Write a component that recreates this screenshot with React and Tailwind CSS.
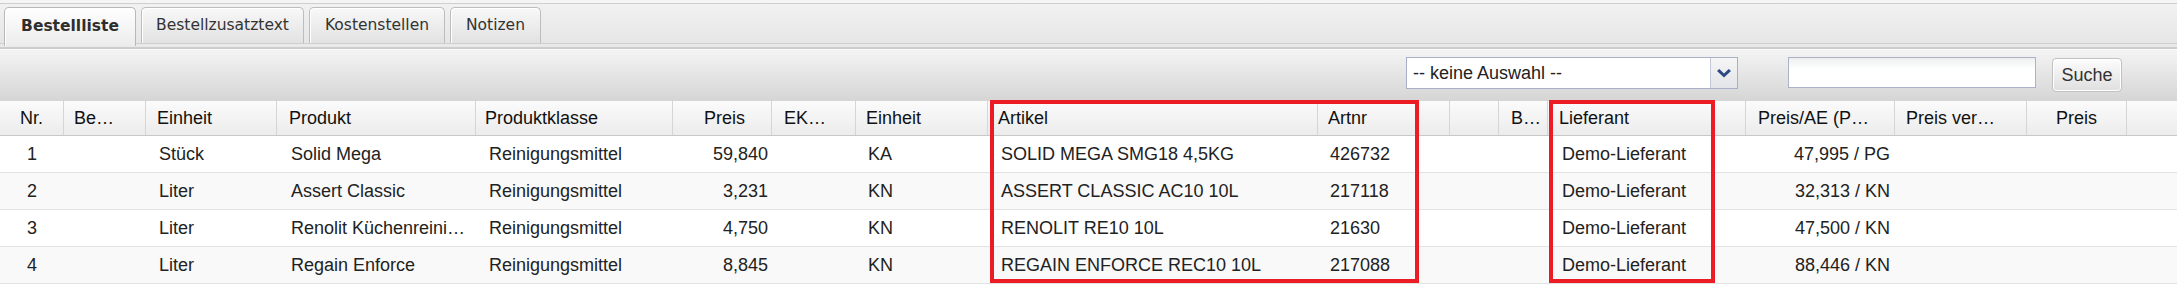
import React from 'react';

// fixed column widths, shared by header and body rows
const COLS = "grid grid-cols-[64px_82px_131px_199px_197px_99px_84px_132px_330px_132px_49px_49px_198px_149px_132px_100px_1fr]";

const columns = [
  { label: "Nr.", head: "justify-center", body: "text-center", key: "nr" },
  { label: "Be…", head: "pl-[10px]", body: "", key: "be" },
  { label: "Einheit", head: "pl-[11px]", body: "pl-[13px]", key: "einheit" },
  { label: "Produkt", head: "pl-[12px]", body: "pl-[14px]", key: "produkt" },
  { label: "Produktklasse", head: "pl-[9px]", body: "pl-[13px]", key: "klasse" },
  { label: "Preis", head: "justify-end pr-[26px]", body: "text-right pr-[4px]", key: "preis" },
  { label: "EK…", head: "pl-[12px]", body: "", key: "ek" },
  { label: "Einheit", head: "pl-[10px]", body: "pl-[12px]", key: "einheit2" },
  { label: "Artikel", head: "pl-[10px]", body: "pl-[13px]", key: "artikel" },
  { label: "Artnr", head: "pl-[10px]", body: "pl-[12px]", key: "artnr" },
  { label: "", head: "", body: "", key: "x" },
  { label: "B…", head: "pl-[12px]", body: "", key: "b" },
  { label: "Lieferant", head: "pl-[11px]", body: "pl-[14px]", key: "lieferant" },
  { label: "Preis/AE (P…", head: "pl-[12px]", body: "text-right pr-[5px]", key: "preisAe" },
  { label: "Preis ver…", head: "pl-[11px]", body: "", key: "preisVer" },
  { label: "Preis", head: "justify-center", body: "", key: "preis2" },
  { label: "", head: "border-r-0", body: "", key: "rest" },
];

const rows = [
  { nr: "1", einheit: "Stück", produkt: "Solid Mega", klasse: "Reinigungsmittel", preis: "59,840", einheit2: "KA", artikel: "SOLID MEGA SMG18 4,5KG", artnr: "426732", lieferant: "Demo-Lieferant", preisAe: "47,995 / PG" },
  { nr: "2", einheit: "Liter", produkt: "Assert Classic", klasse: "Reinigungsmittel", preis: "3,231", einheit2: "KN", artikel: "ASSERT CLASSIC AC10 10L", artnr: "217118", lieferant: "Demo-Lieferant", preisAe: "32,313 / KN" },
  { nr: "3", einheit: "Liter", produkt: "Renolit Küchenreini…", klasse: "Reinigungsmittel", preis: "4,750", einheit2: "KN", artikel: "RENOLIT RE10 10L", artnr: "21630", lieferant: "Demo-Lieferant", preisAe: "47,500 / KN" },
  { nr: "4", einheit: "Liter", produkt: "Regain Enforce", klasse: "Reinigungsmittel", preis: "8,845", einheit2: "KN", artikel: "REGAIN ENFORCE REC10 10L", artnr: "217088", lieferant: "Demo-Lieferant", preisAe: "88,446 / KN" },
];

const tabs = [
  { label: "Bestellliste", width: "w-[132px]", active: true },
  { label: "Bestellzusatztext", width: "w-[163px]" },
  { label: "Kostenstellen", width: "w-[136px]" },
  { label: "Notizen", width: "w-[91px]" },
];

const Tab = ({ label, width, active }) => (
  <div
    className={
      active
        ? `relative z-10 ${width} h-[39px] -mb-[3px] flex items-center justify-center rounded-t-[5px] border border-b-0 border-[#b8b8b8] bg-linear-to-b from-[#ffffff] to-[#ececec] shadow-[inset_1px_1px_0_#ffffff] font-bold text-[#2e2e2e]`
        : `${width} h-[36px] flex items-center justify-center rounded-t-[5px] border border-b-0 border-[#bdbdbd] bg-linear-to-b from-[#f8f8f8] to-[#e2e2e2] shadow-[inset_1px_1px_0_#ffffff] text-[#333]`
    }
  >
    {label}
  </div>
);

const App = () => {
  return (
    <div className="relative w-[2177px] h-[284px] overflow-hidden bg-white font-['Liberation_Sans',Arial,sans-serif]">
      {/* tab strip */}
      <div className="h-[3px] bg-[#f5f5f5]" />
      <div className="h-[41px] border-t border-b border-[#cfcfcf] bg-linear-to-b from-[#f1f1f1] to-[#e6e6e6] flex items-end gap-[5px] pl-[4px] font-['DejaVu_Sans',Verdana,sans-serif] text-[15.5px]">
        {tabs.map((t) => (
          <Tab key={t.label} {...t} />
        ))}
      </div>
      <div className="h-[5px] bg-[#e9e9e9] border-b-2 border-[#cdcdcd]" />

      {/* toolbar */}
      <div className="h-[52px] border-t border-[#fafafa] bg-linear-to-b from-[#f4f4f4] to-[#d5d5d5] flex items-start justify-end pt-[7px] pr-[55px]">
        <div className="w-[332px] h-[32px] flex border border-[#a8afc6] bg-white">
          <div className="flex-1 flex items-center pl-[6px] text-[18px] text-[#222]">-- keine Auswahl --</div>
          <div className="w-[27px] flex items-center justify-center border-l border-[#c3c7d6] bg-linear-to-b from-[#f6f6f6] to-[#e3e4e8]">
            <svg width="14" height="9" viewBox="0 0 14 9">
              <polygon points="0,2 2.3,0 7,4.4 11.7,0 14,2 7,8.4" fill="#2c4a82" />
            </svg>
          </div>
        </div>
        <div className="ml-[50px] w-[248px] h-[31px] border border-[#aab1c8] bg-linear-to-b from-[#eef0f0] to-[#ffffff] to-40%" />
        <button className="ml-[16px] mt-[1px] w-[70px] h-[34px] rounded-[4px] border border-[#c2c2c2] bg-linear-to-b from-[#fdfdfd] to-[#dfdfdf] shadow-[inset_0_0_0_1px_#ffffff] text-[18px] text-[#333]">
          Suche
        </button>
      </div>

      {/* grid header */}
      <div className={`${COLS} h-[35px] border-b border-[#c8c8c8] bg-linear-to-b from-[#fbfbfb] to-[#ececec] text-[18px] text-[#111]`}>
        {columns.map((c, i) => (
          <div
            key={i}
            className={`flex items-center h-full overflow-hidden whitespace-nowrap border-r border-[#d5d5d5] ${c.head}`}
          >
            {c.label}
          </div>
        ))}
      </div>

      {/* grid body */}
      {rows.map((r, ri) => (
        <div
          key={ri}
          className={`${COLS} h-[37px] items-center border-b border-[#e2e2e2] text-[18px] text-[#222] ${ri % 2 === 0 ? 'bg-white' : 'bg-[#f9f9f9]'}`}
        >
          {columns.map((c, i) => (
            <div key={i} className={`overflow-hidden whitespace-nowrap ${c.body}`}>
              {r[c.key] ?? ""}
            </div>
          ))}
        </div>
      ))}

      {/* red highlight frames */}
      <div className="absolute left-[990px] top-[100px] w-[429px] h-[183px] border-4 border-[#ec1c24] pointer-events-none" />
      <div className="absolute left-[1549px] top-[100px] w-[166px] h-[183px] border-4 border-[#ec1c24] pointer-events-none" />
    </div>
  );
};

export default App;
